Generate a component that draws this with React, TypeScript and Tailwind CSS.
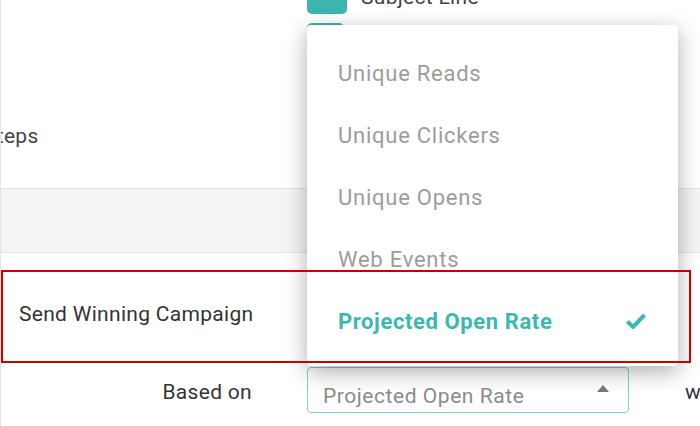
import React from "react";

const items = ["Unique Reads", "Unique Clickers", "Unique Opens", "Web Events"];

export default function App() {
  return (
    <div
      className="relative w-[700px] h-[426px] overflow-hidden bg-white border-l border-[#e4e4e4]"
      style={{ fontFamily: "Roboto, 'Liberation Sans', sans-serif" }}
    >
      {/* top section */}
      <div className="h-[188px] flex flex-col">
        <div className="flex items-center -mt-[26px] pl-[306px]">
          <div className="shrink-0 w-[40px] h-[40px] rounded-[5px] bg-[#3bb5ad]" />
          <span className="ml-[14px] mt-[8px] text-[21px] tracking-[0.3px] text-[#444]">Subject Line</span>
        </div>
        <div className="pl-[306px] mt-[9px]">
          <div className="w-[37px] h-[37px] rounded-[5px] border-[3px] border-[#3bb5ad]" />
        </div>
        <div className="mt-[64px] -ml-[17px] text-[21px] tracking-[0.3px] text-[#444] leading-[24px]">Steps</div>
      </div>
      {/* gray band */}
      <div className="h-[65px] bg-[#f4f4f4] border-y border-[#e2e2e2]" />
      {/* send winning campaign */}
      <div className="pt-[49px] pb-[41px] pl-[18px]">
        <div className="text-[21px] tracking-[0.3px] leading-[24px] text-[#333]">Send Winning Campaign</div>
      </div>
      {/* based on row */}
      <div className="flex items-center">
        <div className="shrink-0 w-[251px] pt-[5px] text-right text-[21px] tracking-[0.3px] text-[#333]">Based on</div>
        <div className="shrink-0 ml-[55px] w-[322px] h-[46px] rounded-[4px] border border-[#7dd0cb] flex items-center pl-[15px] pr-[19px] justify-between">
          <span className="pt-[14px] text-[21px] tracking-[0.55px] text-[#8b8b8b]">Projected Open Rate</span>
          <svg width="12" height="7" viewBox="0 0 12 7" className="-mt-[4px]">
            <path d="M0 7 L6 0 L12 7 Z" fill="#7a7a7a" />
          </svg>
        </div>
        <div className="shrink-0 ml-[56px] pt-[5px] text-[21px] tracking-[0.3px] text-[#333]">with</div>
      </div>

      {/* dropdown menu */}
      <div className="absolute left-[306px] top-[25px] w-[371px] h-[341px] bg-white rounded-[4px] shadow-[0_6px_22px_rgba(0,0,0,0.32)] pt-[17px]">
        {items.map((t) => (
          <div key={t} className="h-[62px] flex items-center pl-[31px] text-[22px] text-[#9c9c9c] tracking-[0.75px]">
            {t}
          </div>
        ))}
        <div className="h-[62px] flex items-center justify-between pl-[31px] pr-[32px] text-[22px] font-bold text-[#3bb9b1] tracking-[0.6px]">
          <span>Projected Open Rate</span>
          <svg width="20" height="16" viewBox="0 0 20 16">
            <path d="M1.5 8.5 L7 14 L18.5 2" fill="none" stroke="#3bb9b1" strokeWidth="4" strokeLinejoin="round" />
          </svg>
        </div>
      </div>

      {/* highlight */}
      <div className="absolute left-0 top-[270px] w-[690px] h-[93px] border-2 border-[#cc0000]" />
    </div>
  );
}
